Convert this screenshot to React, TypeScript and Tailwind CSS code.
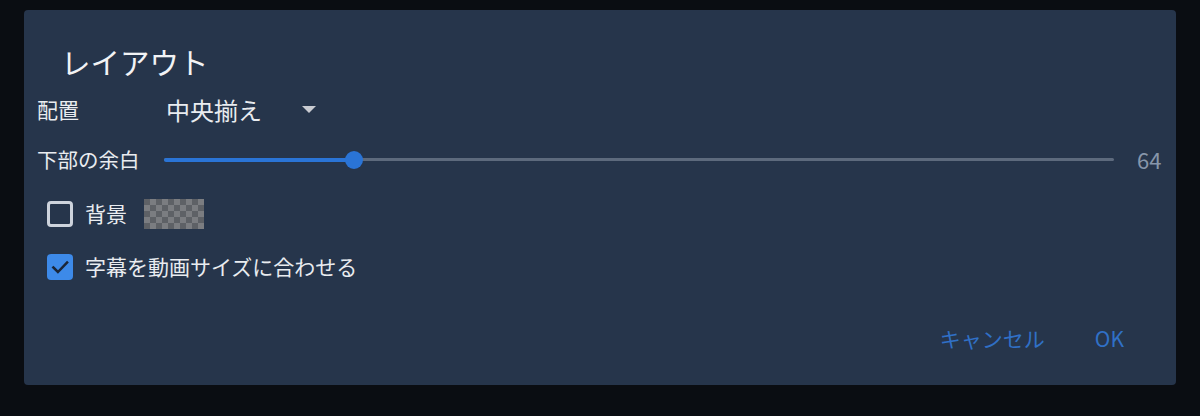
import React from "react";

const font = { fontFamily: '"Noto Sans CJK JP", "Noto Sans", sans-serif' };

function Checker() {
  const cells = [];
  for (let r = 0; r < 5; r++) {
    for (let c = 0; c < 10; c++) {
      cells.push(
        <div
          key={`${r}-${c}`}
          className={(r + c) % 2 === 0 ? "bg-[#5e6166]" : "bg-[#7b7d81]"}
        />
      );
    }
  }
  return (
    <div className="grid grid-cols-[repeat(10,6px)] grid-rows-[repeat(5,6px)] w-[60px] h-[30px]">
      {cells}
    </div>
  );
}

export default function App() {
  return (
    <div className="w-[1200px] h-[416px] bg-[#0a0d12] pt-[10px] pl-[24px]" style={font}>
      <div className="w-[1152px] h-[375px] bg-[#26354b] rounded-[4px] flex flex-col text-[#e9ecf0] overflow-hidden">
        <div className="shrink-0 h-[40px] mt-[31px] pl-[37px] flex items-center text-[29.5px] text-[#f2f3f5]">
          レイアウト
        </div>
        <div className="shrink-0 h-[58px] pl-[13px] flex items-center">
          <span className="text-[21px] w-[129px]">配置</span>
          <span className="text-[24px] w-[136px]">中央揃え</span>
          <svg width="14" height="8" viewBox="0 0 14 8">
            <polygon points="0,0 14,0 7,7" fill="#c9ccd2" />
          </svg>
        </div>
        <div className="shrink-0 h-[41px] pl-[13px] flex items-center">
          <span className="text-[20.5px] w-[127px]">下部の余白</span>
          <div className="relative w-[950px] h-[18px] flex items-center">
            <div className="w-full h-[3px] bg-[#5d6a7d] rounded-full" />
            <div className="absolute left-0 top-[7px] w-[190px] h-[4px] bg-[#2a74d6] rounded-full" />
            <div className="absolute left-[181px] top-0 w-[18px] h-[18px] rounded-full bg-[#2a74d6]" />
          </div>
          <span className="ml-[23px] text-[22px] text-[#8796aa]">64</span>
        </div>
        <div className="shrink-0 h-[68px] pl-[23px] flex items-center">
          <div className="w-[26px] h-[26px] rounded-[4px] border-[3px] border-[#cdd3dc]" />
          <span className="ml-[12px] text-[21px] w-[59px]">背景</span>
          <Checker />
        </div>
        <div className="shrink-0 h-[38px] pl-[23px] flex items-center">
          <div className="w-[26px] h-[26px] rounded-[4px] bg-[#3d8ae9] flex items-center justify-center">
            <svg width="20" height="20" viewBox="0 0 24 24" fill="none">
              <path d="M4 12.5 L9.5 18 L20.5 6.5" stroke="#1b2638" strokeWidth="3" strokeLinecap="square" />
            </svg>
          </div>
          <span className="ml-[12px] text-[21px]">字幕を動画サイズに合わせる</span>
        </div>
        <div className="shrink-0 h-[99px] pt-[7px] flex items-center justify-end pr-[52px] text-[21px] text-[#3070c6]">
          <span>キャンセル</span>
          <span className="ml-[50px]">OK</span>
        </div>
      </div>
    </div>
  );
}
